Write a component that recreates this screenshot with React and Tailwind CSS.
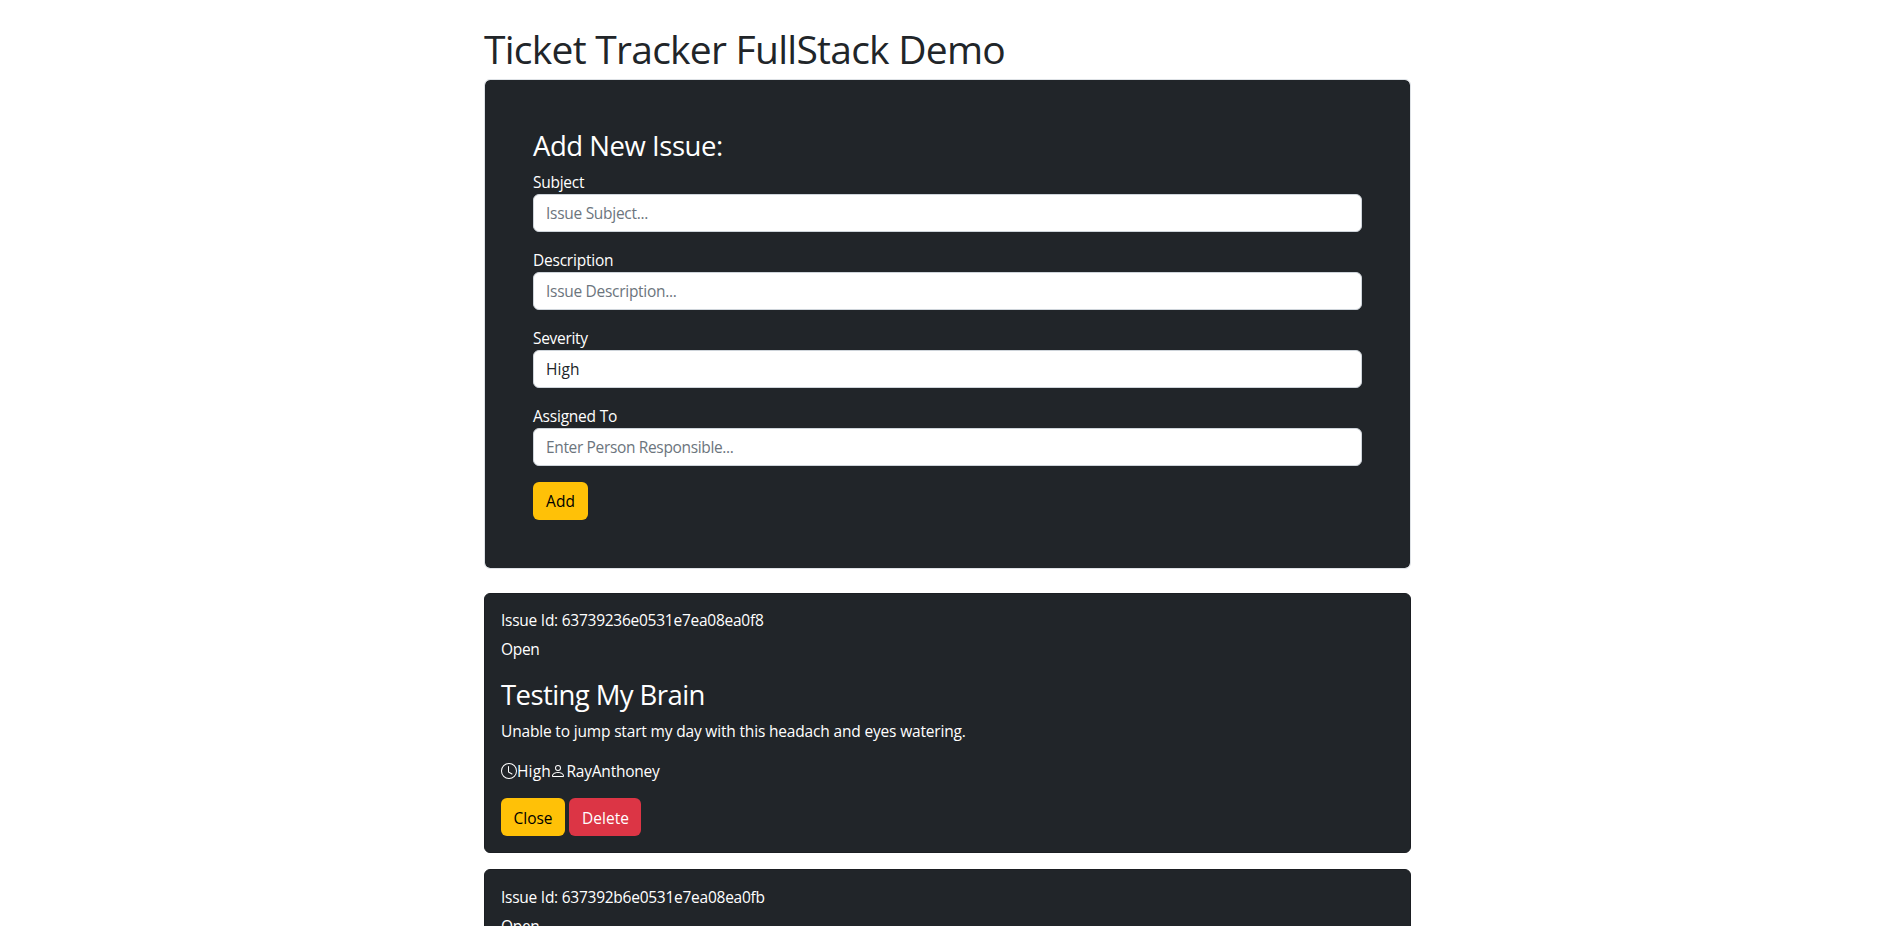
import React from "react";

const labelClass = "block h-6 leading-6 text-[15.5px]";
const inputClass =
  "block w-full h-[38px] rounded-md border border-[#ced4da] bg-white px-3 py-1.5 text-[15.5px] leading-6 text-[#212529] placeholder:text-[#6c757d] placeholder:opacity-100 outline-none";
const buttonClass = "h-[38px] rounded-md text-center text-[15.5px]";

function ClockIcon() {
  return (
    <svg className="mt-1 h-4 w-4 shrink-0" viewBox="0 0 16 16" fill="currentColor">
      <path d="M8 3.5a.5.5 0 0 0-1 0V9a.5.5 0 0 0 .252.434l3.5 2a.5.5 0 0 0 .496-.868L8 8.71V3.5z" />
      <path d="M8 16A8 8 0 1 0 8 0a8 8 0 0 0 0 16zm7-8A7 7 0 1 1 1 8a7 7 0 0 1 14 0z" />
    </svg>
  );
}

function PersonIcon() {
  return (
    <svg className="mt-1 h-4 w-4 shrink-0" viewBox="0 0 16 16" fill="currentColor">
      <path d="M8 8a3 3 0 1 0 0-6 3 3 0 0 0 0 6zm2-3a2 2 0 1 1-4 0 2 2 0 0 1 4 0zm4 8c0 1-1 1-1 1H3s-1 0-1-1 1-4 6-4 6 3 6 4zm-1-.004c-.001-.246-.154-.986-.832-1.664C11.516 10.68 10.289 10 8 10c-2.29 0-3.516.68-4.168 1.332-.678.678-.83 1.418-.832 1.664h10z" />
    </svg>
  );
}

function Field({ label, labelTracking, tracking, ...props }) {
  return (
    <div className="mb-4">
      <label className={`${labelClass} ${labelTracking}`}>{label}</label>
      <input className={`${inputClass} ${tracking}`} {...props} />
    </div>
  );
}

function IssueForm() {
  return (
    <form className="h-[490px] rounded-md border border-[#dee2e6] bg-[#212529] bg-clip-padding p-12 text-white">
      <h2 className="mb-2 h-[34px] text-[27.5px] leading-[36px] tracking-[-0.0167em]">
        Add New Issue:
      </h2>
      <Field
        label="Subject"
        labelTracking="tracking-[-0.0175em]"
        tracking="tracking-[-0.0184em]"
        placeholder="Issue Subject..."
      />
      <Field
        label="Description"
        labelTracking="tracking-[-0.0145em]"
        tracking="tracking-[-0.0185em]"
        placeholder="Issue Description..."
      />
      <div className="mb-4">
        <label className={`${labelClass} tracking-[-0.0203em]`}>Severity</label>
        <select className={`${inputClass} appearance-none tracking-[0.005em]`} defaultValue="High">
          <option>Low</option>
          <option>Medium</option>
          <option>High</option>
        </select>
      </div>
      <Field
        label="Assigned To"
        labelTracking="tracking-[-0.0139em]"
        tracking="tracking-[-0.0225em]"
        placeholder="Enter Person Responsible..."
      />
      <button type="button" className={`${buttonClass} w-[55px] bg-[#ffc107] leading-[38px] text-black`}>
        Add
      </button>
    </form>
  );
}

function IssueCard({ id, status, title, description, severity, assignee, className }) {
  return (
    <article className={`h-[260px] rounded-md border border-[#1b1e22] bg-[#212529] px-4 text-white ${className}`}>
      <p className="h-6 text-[15.5px] leading-6 tracking-[-0.0165em]">Issue Id: {id}</p>
      <p className="mt-[5px] h-6 text-[15.5px] leading-6 tracking-[-0.0203em]">{status}</p>
      {title && (
        <>
          <h3 className="mt-4 h-[34px] text-[27.5px] leading-[36px] tracking-[-0.0212em]">{title}</h3>
          <p className="mt-2 h-6 text-[15.5px] leading-6 tracking-[-0.011em]">{description}</p>
          <div className="mt-4 flex h-6 items-start text-[15.5px] leading-6">
            <ClockIcon />
            <span className="w-[33px] whitespace-nowrap tracking-[0.01em]">{severity}</span>
            <PersonIcon />
            <span className="whitespace-nowrap pl-[0.5px] tracking-[-0.0145em]">{assignee}</span>
          </div>
          <div className="mt-[15px] flex gap-1">
            <button type="button" className={`${buttonClass} w-16 bg-[#ffc107] leading-[40px] text-black`}>
              Close
            </button>
            <button type="button" className={`${buttonClass} w-[72px] bg-[#dc3545] pl-px leading-[40px] text-white`}>
              Delete
            </button>
          </div>
        </>
      )}
    </article>
  );
}

export default function App() {
  return (
    <div className="h-screen overflow-hidden bg-white font-['Open_Sans',sans-serif] text-[#212529]">
      <main className="ml-[484px] w-[927px] pt-[25px]">
        <h1 className="mb-1.5 h-12 text-[39px] leading-[48px] tracking-[-0.0189em]">
          Ticket Tracker FullStack Demo
        </h1>
        <IssueForm />
        <section className="mt-6 flex flex-col gap-4">
          <IssueCard
            className="pt-[14px]"
            id="63739236e0531e7ea08ea0f8"
            status="Open"
            title="Testing My Brain"
            description="Unable to jump start my day with this headach and eyes watering."
            severity="High"
            assignee="RayAnthoney"
          />
          <IssueCard
            className="pt-[15px]"
            id="637392b6e0531e7ea08ea0fb"
            status="Open"
          />
        </section>
      </main>
    </div>
  );
}
